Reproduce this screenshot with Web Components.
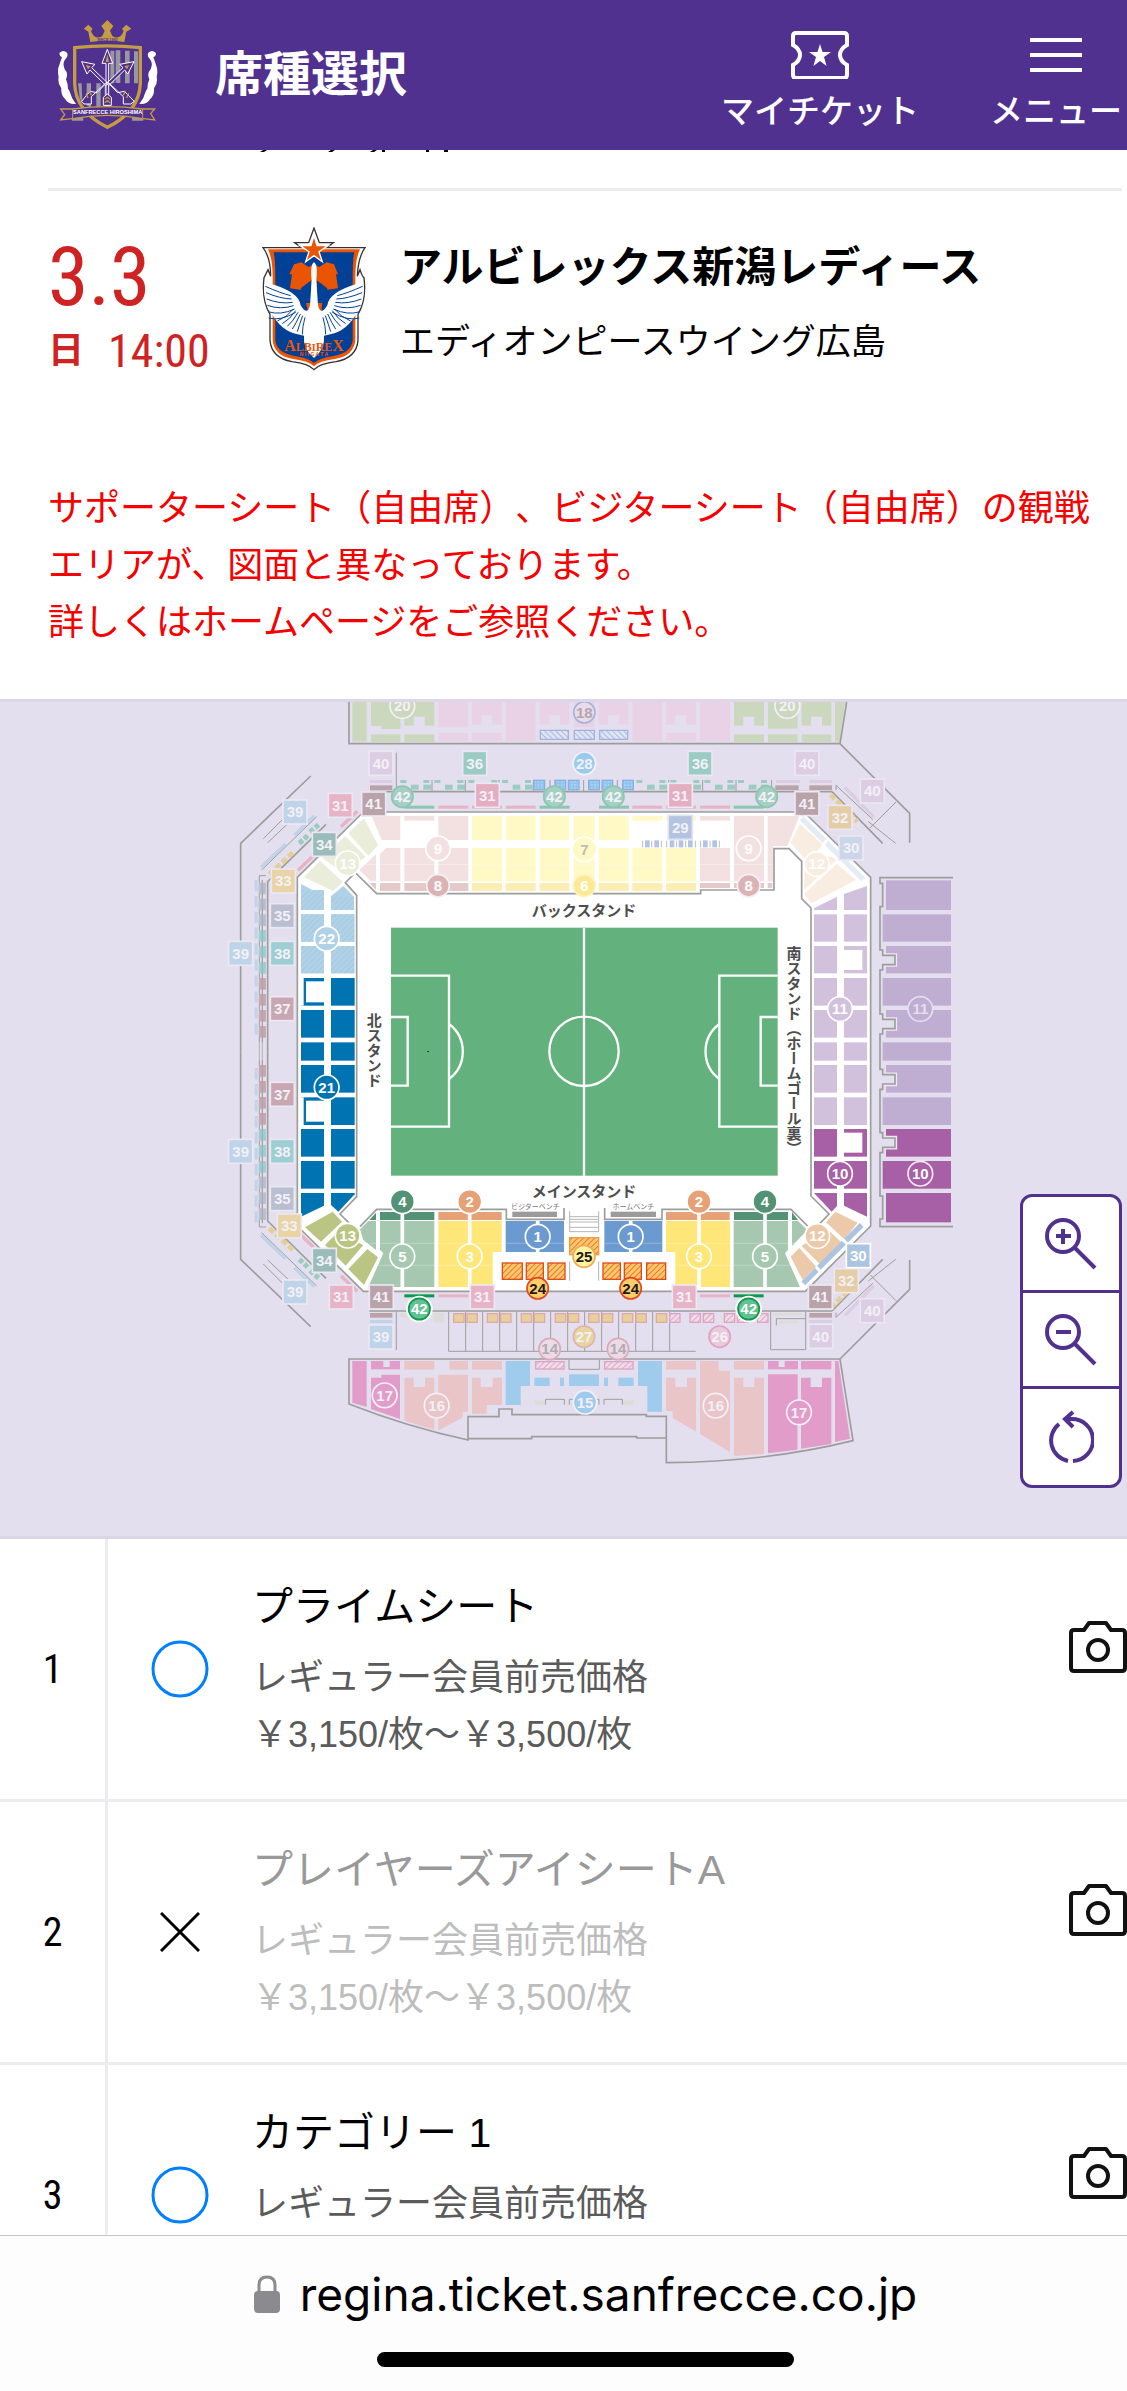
<!DOCTYPE html>
<html lang="ja">
<head>
<meta charset="utf-8">
<meta name="viewport" content="width=device-width, initial-scale=1">
<title>席種選択</title>
<style>
    body {
        --purple: #50318f;
        --line: #ebebf0;
        --red: #cf2323;
        --narrow: "Roboto Condensed", "Liberation Sans Narrow", "Noto Sans CJK JP", sans-serif;
        margin: 0;
        background: white;
        color: black;
        font-family: "Liberation Sans", "Noto Sans CJK JP", sans-serif;
        text-spacing-trim: space-all;
    }
</style>
</head>
<body>

<ticket-page>
    <app-header slot="header">席種選択</app-header>
    <match-info day="3.3" weekday="日" time="14:00">
        <span slot="team">アルビレックス新潟レディース</span>
        <span slot="place">エディオンピースウイング広島</span>
    </match-info>
    <seat-notice>サポーターシート（自由席）、ビジターシート（自由席）の観戦エリアが、図面と異なっております。<br>詳しくはホームページをご参照ください。</seat-notice>
    <seat-map><map-controls></map-controls></seat-map>
    <seat-row number="1" status="open">
        <span slot="name">プライムシート</span>
        <span slot="type">レギュラー会員前売価格</span>
        <span slot="price">￥3,150/枚〜￥3,500/枚</span>
    </seat-row>
    <seat-row number="2" status="closed">
        <span slot="name">プレイヤーズアイシートA</span>
        <span slot="type">レギュラー会員前売価格</span>
        <span slot="price">￥3,150/枚〜￥3,500/枚</span>
    </seat-row>
    <seat-row number="3" status="open">
        <span slot="name">カテゴリー 1</span>
        <span slot="type">レギュラー会員前売価格</span>
    </seat-row>
    <url-bar slot="footer">regina.ticket.sanfrecce.co.jp</url-bar>
</ticket-page>

<script>
// attaches an open shadow root with the given markup
function shadow(el, html) {
    const template = document.createElement('template');
    template.innerHTML = html;
    el.attachShadow({mode: 'open'}).appendChild(template.content.cloneNode(true));
}

class TicketPage extends HTMLElement {
    constructor() {
        super();
        shadow(this, `
            <style>
                :host {
                    display: flex;
                    flex-direction: column;
                    height: 100vh;
                    overflow: hidden;
                }
                main {
                    flex: 1;
                    min-height: 0;
                    overflow: hidden;
                }
            </style>
            <slot name="header"></slot>
            <main><slot></slot></main>
            <slot name="footer"></slot>
        `);
    }
}

class ClubCrest extends HTMLElement {
    constructor() {
        super();
        shadow(this, `
            <style>
                :host { display: block; width: 100px; }
                svg { display: block; width: 100%; }
            </style>
            <svg viewBox="0 0 300 330" role="img" aria-label="SANFRECCE HIROSHIMA">
                <path fill="#c39c43" d="M97 66 91 35 77 26 91 14 104 26 99 33Q110 62 133 48L140 32 130 18 148 0 166 18 156 32 163 48Q186 62 197 33L192 26 205 14 220 26 205 35 199 66Q148 58 97 66Z"/>
                <text x="148" y="62" font-size="11" font-weight="bold" text-anchor="middle" fill="#50318f">SINCE 1992</text>
                <path fill="#50318f" stroke="#c39c43" stroke-width="10" d="M50 83Q148 72 247 83V190Q244 275 148 322 52 275 50 190Z"/>
                <g fill="#99979f">
                    <path d="M157 92h12v98h-12zM173 91h14v98h-14zM201 92h14v98h-14zM228 94h12v96h-12z"/>
                    <path d="M60 190h11l2 60-8-16zM86 190h13v75l-13-10zM115 190h13v72h-13zM140 190h8v66h-8z"/>
                </g>
                <!-- three arrows -->
                <g fill="#50318f" stroke="#fff" stroke-width="3">
                    <path d="M144 258V130h-12L148 88l16 42h-12v128z"/>
                    <path fill="#c39c43" stroke="none" d="M143 126 148 103l5 23z"/>
                    <path d="M143 196 96 150l-9 12-16-37 40 8-10 10 50 48zM153 196 200 150l9 12 19-37-43 8 10 10-50 48z"/>
                    <path fill="#c39c43" stroke="none" d="M83 135l15 4-8 9zM214 135l-15 4 8 9z"/>
                    <path d="M142 190l-42 40 0 22-22 0-7-8 16-20 10-10 20 4 31-32zM154 190l42 40 0 22 22 0 11-8-20-20-10-10-20 4-31-32z"/>
                    <path d="M148 222l-12 10v24h24v-24z"/>
                </g>
                <path fill="none" stroke="#c39c43" stroke-width="4" d="M84 220l6 14m4-22 6 14M212 220l-6 14m-4-22-6 14M140 238l8-6 8 6M140 248l8-6 8 6"/>
                <!-- laurels -->
                <g id="laurel" fill="#fff">
                    <path d="M5 98Q16 88 27 98 32 108 22 118 12 128 20 148 32 160 24 178 30 192 30 206 36 214 42 234L54 252Q30 254 22 238 8 226 10 205-2 190 2 170-3 150 4 135 8 122 12 112 2 108 5 98Z"/>
                </g>
                <use href="#laurel" transform="matrix(-1 0 0 1 298 0)"/>
                <path fill="#99979f" d="M42 290h34v12H42zM222 290h34v12h-34z"/>
                <path fill="#50318f" stroke="#c39c43" stroke-width="4" d="M8 267h36q104-14 210 0h36l-12 14 12 19-40-5q-102-18-200 0l-42 5 12-16z"/>
                <path fill="none" stroke="#c39c43" stroke-width="3" d="M44 267v28M254 267v28"/>
                <text x="149" y="283" font-size="17" font-weight="bold" text-anchor="middle" fill="#fff">SANFRECCE HIROSHIMA</text>
            </svg>
        `);
    }
}

class AppHeader extends HTMLElement {
    constructor() {
        super();
        shadow(this, `
            <style>
                :host {
                    display: flex;
                    align-items: center;
                    height: 150px;
                    padding: 0 5px 0 58px;
                    box-sizing: border-box;
                    background: var(--purple);
                    color: white;
                }
                h1 {
                    margin: 0 0 0 57px;
                    flex: 1;
                    font-size: 48px;
                    line-height: 72px;
                    font-weight: 700;
                    white-space: nowrap;
                }
                nav {
                    display: flex;
                    gap: 71px;
                    padding-top: 14px;
                }
                a, button {
                    display: flex;
                    flex-direction: column;
                    align-items: center;
                    gap: 6px;
                    padding: 0;
                    border: 0;
                    background: none;
                    color: inherit;
                    font: 500 33px/48px "Noto Sans CJK JP", sans-serif;
                    text-decoration: none;
                    white-space: nowrap;
                }
                nav svg { height: 48px; }
            </style>
            <club-crest></club-crest>
            <h1><slot></slot></h1>
            <nav>
                <a href="#tickets">
                    <svg viewBox="0 0 58 48" width="58" fill="none" stroke="#fff" stroke-width="4">
                        <path d="M5 2H53Q56 2 56 5V14Q49 18 49 24T56 34V44Q56 47 53 47H5Q2 47 2 44V34Q9 30 9 24T2 14V5Q2 2 5 2Z"/>
                        <path fill="#fff" stroke="none" d="M29 13l2.500 8H40l-7 5 2.600 9L29 30l-6.600 5L25 26l-7-5h8.500z"/>
                    </svg>
                    <span>マイチケット</span>
                </a>
                <button type="button">
                    <svg viewBox="0 0 52 48" width="52" stroke="#fff" stroke-width="4">
                        <path d="M0 9H52M0 24H52M0 39H52"/>
                    </svg>
                    <span>メニュー</span>
                </button>
            </nav>
        `);
    }
}

class AlbirexBadge extends HTMLElement {
    constructor() {
        super();
        // feather lines of one wing, the other one is mirrored
        let feathers = '';
        for (let i = 0; i < 6; i++) {
            feathers += `<path d="M${10 + i * 2} ${178 + i * 19}Q55 ${198 + i * 17} ${86 + i * 3} ${206 + i * 10}"/>`;
        }
        for (let i = 0; i < 6; i++) {
            feathers += `<path d="M${46 + i * 15} ${282 + i * 8}Q${76 + i * 9} ${270 + i * 6} ${94 + i * 7} ${246 + i * 5}"/>`;
        }
        shadow(this, `
            <style>
                :host { display: block; width: 104px; }
                svg { display: block; width: 100%; }
            </style>
            <svg viewBox="0 0 312 432" role="img" aria-label="ALBIREX NIIGATA">
                <path fill="#fff" stroke="#3a3030" stroke-width="4" d="M3 62H118L98 47H140L156 3 172 47H214L194 62H309Q288 92 286 148L294 128Q300 148 306 152 314 220 288 262V340Q284 392 222 404 172 410 156 428 140 410 90 404 28 392 24 340V262Q-2 220 6 152L18 128 26 148Q26 92 3 62Z"/>
                <path fill="#ea5504" d="M18 67H294Q280 95 280 150V340Q275 388 218 396 172 402 156 418 140 402 94 396 37 388 32 340V150Q32 95 18 67Z"/>
                <path fill="#004097" d="M35 76H277Q272 95 272 150V340Q268 378 214 387 172 393 156 408 140 393 98 387 44 378 40 340V150Q40 95 35 76Z"/>
                <path fill="#ea5504" stroke="#fff" stroke-width="4" d="M156 26 165 56H198L171 74 181 104 156 86 131 104 141 74 114 56H147Z"/>
                <path fill="#ea5504" d="M82 142 96 112 118 106 140 120 156 112 172 120 194 106 216 112 228 142 222 142 228 184 184 190 178 255H138L124 190 84 184 90 142Z"/>
                <path fill="#004097" d="M116 184 148 160V228H132ZM196 184 164 160V228H180Z"/>
                <path fill="#fff" d="M156 106Q168 112 163 160L168 235Q176 268 196 235 200 195 286 170L294 145Q304 160 306 190 302 240 284 258 255 312 205 322L186 326Q190 365 156 393 122 365 126 326L107 322Q57 312 28 258 10 240 6 190 8 160 18 145L26 170Q112 195 116 235 136 268 144 235L149 160Q144 112 156 106Z"/>
                <g id="feathers" fill="none" stroke="#004097" stroke-width="3">${feathers}</g>
                <use href="#feathers" transform="matrix(-1 0 0 1 312 0)"/>
                <g fill="#ea5504" text-anchor="middle" font-family="Liberation Serif" font-weight="bold">
                    <text x="156" y="371" font-size="48">A<tspan font-size="36">LB</tspan><tspan font-size="30">I</tspan><tspan font-size="36">RE</tspan>X</text>
                    <text x="156" y="387" font-size="15" font-family="Liberation Sans">N I I G A T A</text>
                </g>
            </svg>
        `);
    }
}

class MatchInfo extends HTMLElement {
    constructor() {
        super();
        shadow(this, `
            <style>
                :host {
                    display: block;
                    padding: 0 5px 0 48px;
                }
                .previous {
                    display: block;
                    height: 38px;
                }
                .match {
                    display: grid;
                    grid-template-columns: 214px 104px 1fr;
                    border-top: 3px solid var(--line);
                    padding-top: 36px;
                }
                .date {
                    color: var(--red);
                    font-family: var(--narrow);
                }
                .day {
                    font-size: 82px;
                    line-height: 100px;
                }
                .time {
                    display: flex;
                    align-items: center;
                    gap: 24px;
                    font-size: 46px;
                    line-height: 48px;
                }
                b {
                    font-size: 36px;
                    font-weight: 700;
                }
                .text { padding-left: 34px; }
                h2 {
                    margin: 11px 0 18px;
                    font-size: 42px;
                    line-height: 60px;
                    font-weight: 700;
                }
                p {
                    margin: 0;
                    font-size: 35px;
                    line-height: 52px;
                }
            </style>
            <svg class="previous" viewBox="0 0 400 38" width="400">
                <path d="M215 0h4l-3 2h-4zM283 0h4l-3 2h-4zM325 0h4l-3 2h-4zM334 0h3v2h-3zM378 0h3v2h-3zM396 0h4v2h-4z"/>
            </svg>
            <div class="match">
                <div class="date">
                    <div class="day"></div>
                    <div class="time"><b></b><span></span></div>
                </div>
                <albirex-badge></albirex-badge>
                <div class="text">
                    <h2><slot name="team"></slot></h2>
                    <p><slot name="place"></slot></p>
                </div>
            </div>
        `);
    }

    connectedCallback() {
        this.shadowRoot.querySelector('.day').textContent = this.getAttribute('day');
        this.shadowRoot.querySelector('.time b').textContent = this.getAttribute('weekday');
        this.shadowRoot.querySelector('.time span').textContent = this.getAttribute('time');
    }
}

class SeatNotice extends HTMLElement {
    constructor() {
        super();
        shadow(this, `
            <style>
                :host {
                    display: block;
                    padding: 105px 34px 48px 48px;
                    color: #f60000;
                    font-size: 36px;
                    line-height: 57px;
                }
            </style>
            <slot></slot>
        `);
    }
}

// ---- seat map drawing, three units to a pixel ----

const BG = '#e4dfee';
const WALL = '#9d9d9d';
const GREEN = '#cbd8be';
const PINK = '#e9d2e6';
const ROSE = '#f3e1e1';
const YELLOW = '#fff9c5';
const SKY = '#9fcbed';
const MAGENTA = '#e19cca';
const SALMON = '#e9c5c8';

const rects = (fill, list) => list.map(([x, y, w, h]) => `<rect x="${x}" y="${y}" width="${w}" height="${h}" fill="${fill}"/>`).join('');
const polys = (fill, list) => list.map(p => `<polygon points="${p}" fill="${fill}"/>`).join('');
const line = (stroke, width, d, extra = '') => `<path d="${d}" fill="none" stroke="${stroke}" stroke-width="${width}" ${extra}/>`;
const columns = (xs, y, w, h) => xs.map(x => [x, y, w, h]);

const square = (n, x, y, fill, edge = '#ebe7f3', ink = '#f3f0f7') => `
    <rect x="${x - 36}" y="${y - 36}" width="72" height="72" fill="${fill}" stroke="${edge}" stroke-width="5"/>
    <text x="${x}" y="${y + 16}" fill="${ink}">${n}</text>`;

const round = (n, x, y, fill, edge = '#fff', ink = '#fff', r = 37) => `
    <circle cx="${x}" cy="${y}" r="${r}" fill="${fill}" stroke="${edge}" stroke-width="5"/>
    <text x="${x}" y="${y + 16}" fill="${ink}">${n}</text>`;

function upperBack() {
    const teal = [541, 643, 745, 846, 1249, 1351, 1453, 1554];
    return rects(GREEN, [[397, 36, 43, 119], [453, 36, 88, 72], [484, 100, 57, 17], [553, 36, 90, 71], [453, 133, 88, 23], [553, 133, 90, 23],
            [1542, 36, 90, 71], [1542, 133, 90, 23], [1644, 36, 89, 80], [1644, 133, 89, 23], [1745, 36, 89, 71], [1745, 133, 89, 23]])
        + polys(GREEN, ['1845,36 1875,36 1859,155 1845,155'])
        + rects(PINK, [[655, 36, 89, 76], [655, 129, 89, 25], [756, 36, 90, 68], [756, 129, 90, 25], [857, 36, 90, 118], [959, 36, 89, 68],
            [1062, 36, 62, 76], [1136, 36, 90, 68], [1237, 36, 90, 118], [1338, 36, 90, 68], [1338, 129, 90, 25], [1440, 36, 90, 118]])
        + rects(BG, [[581, 80, 33, 28], [784, 76, 33, 28], [987, 76, 33, 28], [1165, 76, 33, 28], [1366, 76, 33, 28], [1570, 80, 33, 28], [1773, 80, 33, 28]])
        + `<g fill="url(#hatchBlue)" stroke="#a0b3dc" stroke-width="4"><path d="M961 121h84v27h-84zM1063 121h60v27h-60zM1139 121h84v27h-84z"/></g>`
        + line(WALL, 5, 'M387 36V161H1860L1880 36')
        + line(WALL, 5, 'M450 305H1836')
        + line(WALL, 3, 'M529 188V305M636 270V305M736 270V305M837 270V305M940 270V305M990 270V305M1091 270V305M1192 270V305M1346 270V305M1448 270V305M1548 270V305M1655 270V305')
        + rects('#9accbf', teal.flatMap(x => [[x, 270, 18, 9], [x + 69, 270, 18, 9], [x + 32, 284, 23, 15], [x + 69, 284, 23, 15]]))
        + `<g fill="url(#dots)" stroke="#86b0e2" stroke-width="4">${[942, 1005, 1045, 1106, 1146, 1208].map(x => `<rect x="${x}" y="271" width="32" height="28"/>`).join('')}</g>`
        + rects('#ddcde3', [[450, 270, 67, 9], [1668, 270, 72, 9], [1768, 270, 68, 9]])
        + rects('#b9a3a9', [[450, 286, 67, 14], [1666, 286, 70, 14], [1768, 286, 68, 14]])
        + rects('#8cc5b0', columns([553, 959, 1137, 1541], 347, 90, 9))
        + rects('#e7b3c5', columns([655, 756, 857, 1237, 1338, 1440], 347, 90, 9));
}

function backStand() {
    return polys(ROSE, ['455,378 541,378 541,450 485,450', '480,492 498,474 541,474 541,574 480,574', '418,540 468,492 468,574 452,574', '1643,378 1738,378 1702,468 1643,468'])
        + rects(ROSE, [[553, 378, 90, 14], [655, 378, 90, 72], [553, 474, 90, 100], [655, 474, 90, 100], [1440, 378, 90, 14], [1440, 474, 90, 100],
            [1542, 378, 90, 72], [1542, 450, 90, 124], [1643, 468, 16, 106]])
        + rects('#e5c8c8', [[480, 579, 61, 24], [553, 579, 90, 24], [655, 579, 90, 24], [1440, 579, 90, 15], [1542, 579, 90, 15], [1643, 579, 14, 15]])
        + polys('#e5c8c8', ['448,579 468,579 468,600'])
        + [[378, 72, YELLOW], [474, 100, YELLOW], [579, 24, '#fceeb2']].map(([y, h, fill]) =>
            rects(fill, [[756, y, 90, h], [857, y, 90, h], [959, y, 89, h], [1061, y, 63, h], [1136, y, 90, h]])).join('')
        + rects(YELLOW, [...columns([1237, 1338], 378, 90, 14), ...columns([1237, 1338], 474, 90, 100)])
        + rects('#fceeb2', columns([1237, 1338], 579, 90, 24))
        + line('#fff', 2, 'M418 523H1658', 'opacity="0.5"')
        + rects('#b3c4e0', columns([1275, 1303, 1349, 1376, 1404, 1449, 1477], 451, 14, 21))
        + line(WALL, 2, 'M1268 452V472M1295 452V472M1324 452V472M1340 452V472M1370 452V472M1397 452V472M1426 452V472M1442 452V472M1470 452V472M1498 452V472');
}

function corners() {
    return polys('#e9edd9', ['385,430 432,385 474,465 445,497', '308,503 375,438 437,500 372,552', '252,562 300,512 368,575 340,603'])
        + polys('#f9ede2', ['1712,458 1740,402 1810,464 1758,510', '1754,528 1780,500 1835,500 1848,510 1752,605', '1752,610 1848,520 1908,570 1774,640'])
        + line('#e4edf6', 16, 'M1745 385 1930 568')
        + line('#fff', 9, 'M1800 480 1822 448M1750 608 1862 505')
        + polys('#bac583', ['255,1612 338,1565 366,1595 303,1655', '315,1665 352,1628 430,1665 377,1727', '385,1737 442,1677 474,1702 432,1785'])
        + polys('#ebc9a9', ['1846,1565 1913,1598 1873,1648 1818,1597', '1820,1615 1865,1658 1802,1725 1745,1668', '1712,1700 1738,1674 1788,1730 1748,1770'])
        + line('#abc4e1', 16, 'M1925 1605 1750 1780')
        + line('#fff', 9, 'M1868 1648 1888 1668M1788 1730 1802 1746');
}

function sideStands() {
    const rows = [[673, 82], [768, 82], [864, 83], [960, 83], [1057, 55], [1125, 83], [1222, 83], [1317, 83], [1413, 83]];
    const west = rows.map(([y, h], i) => rects(i < 2 ? '#b0d2e7' : '#0073b2', [[243, y, 69, h], [333, y, 71, h]])).join('');
    const east = rows.map(([y, h], i) => rects(i < 7 ? '#d2c1dc' : '#a75fa5', [[1782, y, 69, h], [1872, y, 69, h]])).join('');
    const far = [[571, 89], ...rows, [1509, 88]].map(([y, h], i) => {
        const left = i % 2 ? 1988 : 1998;
        return rects(i < 8 ? '#c0add2' : '#a75fa5', [[left, y, 2193 - left, h]]);
    }).join('');
    const tab = c => `V${c - 30}h8v16h37v28h-37v16h-8`;
    return west
        + polys('#b0d2e7', ['243,582 312,618 312,660 243,660', '333,618 370,588 402,620 402,660 333,660'])
        + polys('#0073b2', ['243,1509 312,1509 312,1547 243,1580', '333,1509 404,1509 404,1513 355,1565 333,1545'])
        + rects('#fff', [[243, 864, 8, 83], [243, 1222, 8, 83], [258, 874, 56, 63], [258, 1232, 56, 63]])
        + `<path fill="url(#hatchWest)" d="M243 600h69v60h-69zM333 620h69v40h-69zM243 673h69v82h-69zM333 673h69v82h-69zM243 768h69v82h-69zM333 768h69v82h-69z"/>`
        + east
        + polys('#d2c1dc', ['1782,655 1851,620 1851,660 1782,660', '1872,612 1941,588 1941,660 1872,660'])
        + polys('#a75fa5', ['1782,1509 1851,1509 1851,1548 1835,1565', '1872,1509 1941,1509 1941,1580 1872,1547'])
        + rects('#fff', [[1872, 780, 55, 60], [1872, 1328, 55, 60]])
        + far
        + line('#ede8f3', 13, `M1984 796h41v28h-41M1984 988h41v28h-41M1984 1154h41v28h-41M1984 1344h41v28h-41`)
        + rects(BG, [[1984, 796, 39, 28], [1984, 988, 39, 28], [1984, 1154, 39, 28], [1984, 1344, 39, 28]])
        + line(WALL, 5, `M2199 563H1980v17h8v70h-8${tab(810)}${tab(1002)}${tab(1168)}${tab(1358)}V1518h8v69h-8v23H2199`);
}

function mainStand() {
    return rects('#539274', [[480, 1566, 163, 24], [1542, 1566, 162, 24]])
        + polys('#539274', ['448,1590 468,1568 468,1590', '1716,1566 1720,1572 1734,1590 1716,1590'])
        + rects('#e6a276', [[655, 1566, 190, 24], [1338, 1566, 191, 24]])
        + polys('#a6c8b1', ['420,1618 445,1593 468,1593 468,1680 430,1650', '480,1593 643,1593 643,1791 445,1791 490,1690 480,1680',
            '1541,1593 1704,1593 1704,1680 1695,1690 1740,1791 1541,1791', '1716,1593 1734,1593 1762,1620 1716,1668'])
        + polys('#fee678', ['655,1593 845,1593 845,1686 818,1686 818,1791 655,1791', '1338,1593 1530,1593 1530,1791 1366,1791 1366,1686 1338,1686'])
        + rects('#6b9ad1', [[857, 1593, 175, 93], [1153, 1593, 174, 93]])
        + line('#fff', 2, 'M450 1660H1032M450 1726H818M1153 1660H1740M1366 1726H1740', 'opacity="0.4"')
        + line('#fff', 11, 'M547 1566V1791M749 1566V1791M1437 1566V1791M1635 1566V1791M953 1593V1686M1232 1593V1686')
        + `<g fill="url(#hatchOrange)" stroke="#e04a1c" stroke-width="4">${[[847, 60], [919, 51], [984, 51], [1149, 52], [1213, 51], [1280, 57]].map(([x, w]) => `<rect x="${x}" y="1719" width="${w}" height="49"/>`).join('')}</g>`
        + line('#b5b5b5', 3, 'M1049 1564V1625H1136V1564M1049 1580H1136M1049 1588H1136M1049 1596H1136M1049 1612H1136M1049 1714V1772M1136 1714V1772')
        + `<rect x="1049" y="1643" width="87" height="51" fill="url(#hatchOrange)" stroke="#ee9a48" stroke-width="4"/>`
        + rects('#9b9b9b', [[877, 1565, 134, 16], [1172, 1565, 136, 16]]);
}

function lowerMain() {
    const yellow = [701, 741, 802, 842, 904, 943, 1006, 1045, 1106, 1147, 1207, 1248, 1309];
    const pink = [1349, 1410, 1450, 1513, 1552, 1613];
    let posts = '';
    for (let x = 686; x < 1360; x += 51) posts += `M${x} 1866V1984`;
    return rects('#0b9a4a', columns([553, 1541], 1813, 90, 9))
        + rects('#e7b3c5', columns([655, 1440], 1813, 90, 9))
        + line(WALL, 3, `${posts}M686 1984H1427M529 1866V1980`)
        + line(WALL, 3, 'M1652 1866V1979H1757V1866M1669 1906V1886H1757')
        + rects('#dcdcd8', [[538, 1869, 30, 14], [640, 1869, 32, 28], [1660, 1869, 86, 8], [1677, 1892, 58, 8], [945, 2131, 32, 13], [1207, 2131, 34, 13]])
        + line(WALL, 5, 'M448 1863H1836')
        + `<g fill="#e6d09c" stroke="#e3a9a9" stroke-width="4">${yellow.map(x => `<rect x="${x}" y="1871" width="31" height="26"/>`).join('')}</g>`
        + `<g fill="url(#hatchPink)" stroke="#e0a3c4" stroke-width="4">${pink.map(x => `<rect x="${x}" y="1871" width="31" height="26"/>`).join('')}
            <rect x="947" y="2015" width="85" height="22"/><rect x="1154" y="2015" width="85" height="22"/></g>`
        + rects('#b9a3a9', [[450, 1869, 67, 14], [1768, 1869, 68, 14]])
        + rects('#bfd4e8', [[450, 1890, 67, 9]])
        + rects('#ddcde3', [[1768, 1890, 68, 9]])
        + polys(MAGENTA, ['397,2013 440,2013 440,2151 397,2138', '453,2063 484,2063 484,2054 540,2054 540,2187 453,2157',
            '1644,2053 1733,2053 1733,2279 1644,2290', '1743,2063 1772,2063 1772,2091 1806,2091 1806,2063 1834,2063 1834,2262 1743,2276', '1845,2013 1855,2013 1890,2246 1845,2256'])
        + rects(MAGENTA, [[453, 2013, 87, 25], [1644, 2013, 90, 25], [1743, 2013, 91, 25]])
        + rects(BG, [[490, 2013, 19, 18], [1676, 2013, 18, 18]])
        + rects(SALMON, [[553, 2013, 90, 26], [688, 2013, 56, 26], [756, 2013, 90, 26], [1338, 2013, 90, 26], [1542, 2013, 90, 26]])
        + polys(SALMON, ['553,2063 581,2063 581,2091 615,2091 615,2063 643,2063 643,2219 553,2192', '655,2054 744,2054 744,2165 728,2165 728,2182 655,2222',
            '756,2063 782,2063 782,2091 818,2091 818,2063 846,2063 846,2145 800,2145 800,2171 756,2171',
            '1440,2013 1496,2013 1496,2042 1530,2042 1530,2286 1440,2232', '1338,2063 1366,2063 1366,2091 1401,2091 1401,2063 1428,2063 1428,2225 1358,2184 1358,2163 1338,2163',
            '1542,2063 1570,2063 1570,2091 1603,2091 1603,2063 1632,2063 1632,2292 1545,2298 1542,2294'])
        + polys(SKY, ['857,2013 930,2013 930,2088 902,2088 902,2145 857,2145', '1254,2013 1326,2013 1326,2165 1282,2165 1282,2088 1254,2088'])
        + rects(SKY, [[943, 2063, 46, 25], [1020, 2063, 12, 25], [1047, 2053, 90, 35], [1152, 2063, 12, 25], [1195, 2063, 46, 25]])
        + line(BG, 8, 'M650 2180V2222M1737 2190V2280')
        + line(WALL, 3, 'M1047 2010V2038H1138V2010M977 2144V2128H1033V2144M1048 2144V2128H1137V2144M1152 2144V2128H1207V2144')
        + line(WALL, 5, 'M387 2007H1860L1899 2252Q1640 2316 1339 2318V2179H1279V2174H876V2157H837V2180H744V2250Q560 2210 387 2142ZM744 2246H935V2240H1250V2244H1339');
}

function concourse() {
    // north half, mirrored for the south
    const half = line(WALL, 5, 'M272 258 62 460V1084M318 403 143 575V1084M1860 161 2069 370V458M1836 305 1988 460')
        + line(WALL, 3, 'M290 380 125 540M188 388 130 446M215 390 143 458M118 1057V557H138M127 1057V570M1848 300V286L1958 388M1945 395 2027 460M2028 336 1950 414')
        + line('#bfd4e8', 10, 'M123 532 197 462M223 435 283 378')
        + line('#9accbf', 15, 'M238 460 264 436M270 426 296 404', 'stroke-dasharray="14 6"')
        + line('#e5cf98', 15, 'M148 553 222 485M1832 314 1912 395', 'stroke-dasharray="18 8"')
        + line('#e7b3c5', 10, 'M234 541 280 497M363 410 412 364')
        + line('#ddcde3', 10, 'M1875 292 1962 382');
    const blocks = [578, 626, 673, 720, 768, 816, 864, 912, 960, 1008];
    const fills = ['#b9bfd0', '#b9bfd0', '#b9bfd0', '#9dced3', '#9dced3', '#9dced3', '#c8a7b3', '#c8a7b3', '#c8a7b3', '#c8a7b3'];
    return half + `<g transform="matrix(1 0 0 -1 0 2168)">${half}</g>`
        + blocks.map((y, i) => rects(fills[i], [[117, y, 21, 35], [117, 2133 - y, 21, 35]])
            + rects('#bfd4e8', [[104, y - 8, 9, 34], [104, 2142 - y, 9, 34]])).join('')
        + line(WALL, 2, 'M127 570V1600M118 1057V1112');
}

function pitch() {
    return rects('#63b27d', [[513, 713, 1160, 744]])
        + line('#fff', 7, 'M1092 713V1457M513 857H687V1310H513M513 981H563V1187H513M687 1002A103 103 0 0 1 687 1167M1673 857H1498V1310H1673M1673 981H1622V1187H1673M1498 1002A103 103 0 0 0 1498 1167')
        + `<circle cx="1092" cy="1084" r="104" fill="none" stroke="#fff" stroke-width="7"/><rect x="622" y="1083" width="5" height="3" fill="#222"/>`;
}

function labels() {
    const pale = '#f3f0f7';
    const squares = [
        [40, 483, 220, '#ddcde3'], [36, 764, 220, '#9accc5'], [39, 225, 366, '#bfd4e8'], [31, 361, 346, '#e7b3c5'], [41, 461, 342, '#b9a3a9'],
        [31, 802, 316, '#e5adc0'], [31, 1381, 316, '#e5adc0'], [34, 313, 463, '#9abdbb'], [33, 190, 573, '#e8d4a5'], [35, 187, 677, '#b9bfd0'],
        [38, 187, 790, '#9dced3'], [39, 62, 790, '#bfd4e8'], [36, 1440, 220, '#9accc5'], [40, 1761, 220, '#ddcde3'], [40, 1957, 303, '#ddcde3'],
        [41, 1761, 341, '#b9a3a9'], [32, 1860, 382, '#e5cda5'], [30, 1893, 474, '#ccd6e9'], [37, 187, 956, '#c8a7b3'], [37, 187, 1213, '#c8a7b3'],
        [39, 62, 1384, '#bfd4e8'], [38, 187, 1384, '#9dced3'], [35, 187, 1526, '#b9bfd0'], [33, 208, 1608, '#e8d4a5'], [34, 313, 1711, '#9abdbb'],
        [39, 225, 1806, '#bfd4e8'], [31, 364, 1821, '#e7b3c5'], [41, 484, 1821, '#b9a3a9'], [31, 787, 1821, '#e7b3c5'], [39, 483, 1941, '#bfd4e8'],
        [31, 1393, 1821, '#e7b3c5'], [41, 1801, 1821, '#b9a3a9'], [32, 1879, 1772, '#e5cda5'], [40, 1957, 1862, '#ddcde3'], [40, 1802, 1939, '#ddcde3'],
        [29, 1381, 412, '#b3c4e0', '#dfe6f1'], [30, 1915, 1697, '#abc4e1', '#fff', '#fff']
    ];
    const circles = [
        [20, 547, 48, GREEN, pale, pale], [20, 1702, 48, GREEN, pale, pale], [18, 1093, 67, '#e9dbe8', '#a9b3da', '#b3a5b3', 32],
        [28, 1093, 220, '#9acbee', pale, pale, 34],
        ...[547, 1003, 1180, 1640].map(x => [42, x, 320, '#a3d0c3', '#8cc5b0', pale, 32]),
        [9, 654, 475, ROSE], [9, 1586, 475, ROSE], [8, 654, 587, '#dcb3b5', pale, '#fff', 34], [8, 1586, 587, '#dcb3b5', pale, '#fff', 34],
        [7, 1093, 478, YELLOW, '#fff', '#bdbdbd'], [6, 1093, 587, '#fbe994', '#fdf3c4', '#fff', 33], [12, 1790, 522, '#f9ede2'], [13, 383, 520, '#e9edd9'],
        [22, 320, 746, '#b0d2e7'], [21, 320, 1192, '#0073b2'], [13, 383, 1637, '#bac583'],
        [4, 547, 1535, '#539274', '#fff', '#fff', 36], [4, 1635, 1535, '#539274', '#fff', '#fff', 36],
        [2, 749, 1535, '#e6a276', '#fff', '#fff', 36], [2, 1437, 1535, '#e6a276', '#fff', '#fff', 36],
        [1, 953, 1640, '#6b9ad1'], [1, 1232, 1640, '#6b9ad1'], [5, 547, 1699, '#a6c8b1'], [5, 1635, 1699, '#a6c8b1'],
        [3, 749, 1699, '#fee678'], [3, 1437, 1699, '#fee678'],
        [24, 953, 1795, '#ffcd6c', '#e04a1c', '#1a1a1a', 32], [24, 1232, 1795, '#ffcd6c', '#e04a1c', '#1a1a1a', 32], [25, 1092, 1699, '#fff3a0', '#f2a856', '#1a1a1a', 33],
        [12, 1792, 1638, '#ebc9a9'], [14, 989, 1977, '#e9dce6', '#dca9b8', '#b3a9b3', 32], [14, 1194, 1977, '#e9dce6', '#dca9b8', '#b3a9b3', 32],
        [27, 1092, 1940, '#e6d59f', '#e0b3ae', pale, 32], [26, 1499, 1940, '#e9cadb', '#e2a1c4', pale, 32], [15, 1095, 2137, SKY, pale, pale, 35],
        [17, 494, 2116, MAGENTA, pale, pale], [17, 1737, 2167, MAGENTA, pale, pale], [16, 650, 2147, SALMON, pale, pale], [16, 1487, 2147, SALMON, pale, pale],
        [11, 1860, 957, '#d2c1dc'], [11, 2101, 957, '#c0add2', '#e4dfee', '#e4dfee'], [10, 1860, 1451, '#a75fa5'], [10, 2101, 1451, '#a75fa5', '#f3e8f3']
    ];
    return `<g font-size="45" font-weight="bold" text-anchor="middle">
            ${squares.map(s => square(...s)).join('')}
            ${circles.map(c => round(...c)).join('')}
            <g fill="#fff"><circle cx="598" cy="1857" r="40"/><circle cx="1586" cy="1857" r="40"/></g>
            ${round(42, 598, 1857, '#63c194', '#0b9a4a', '#fff', 32)}${round(42, 1586, 1857, '#63c194', '#0b9a4a', '#fff', 32)}
        </g>
        <g font-family="Noto Sans CJK JP" font-size="45" font-weight="bold" fill="#4d4d4d">
            <text x="1092" y="679" text-anchor="middle">バックスタンド</text>
            <text x="1092" y="1521" text-anchor="middle">メインスタンド</text>
            <text x="463" y="968" writing-mode="vertical-rl">北スタンド</text>
            <text x="1722" y="766" writing-mode="vertical-rl">南スタンド（ホームゴール裏）</text>
        </g>
        <g font-family="Noto Sans CJK JP" font-size="21" fill="#777" text-anchor="middle">
            <text x="946" y="1557">ビジターベンチ</text>
            <text x="1240" y="1557">ホームベンチ</text>
        </g>`;
}

class SeatMap extends HTMLElement {
    constructor() {
        super();
        const hatch = (id, back, ink, dir) => `
            <pattern id="${id}" width="12" height="12" patternUnits="userSpaceOnUse" patternTransform="rotate(${dir})">
                <rect width="12" height="12" fill="${back}"/><rect width="3" height="12" fill="${ink}"/>
            </pattern>`;
        shadow(this, `
            <style>
                :host {
                    display: block;
                    position: relative;
                    border-top: 3px solid #ddd5e8;
                    border-bottom: 3px solid #ddd5e8;
                    background: ${BG};
                }
                svg { display: block; width: 100%; }
                slot {
                    display: block;
                    position: absolute;
                    right: 5px;
                    bottom: 48px;
                }
            </style>
            <svg viewBox="-660 36 3381 2502" role="img" aria-label="座席図">
                <defs>
                    ${hatch('hatchBlue', '#dfe3f3', '#a9bbe0', -45)}
                    ${hatch('hatchWest', '#b0d2e7', '#a3c9e1', 45)}
                    ${hatch('hatchOrange', '#ffc96b', '#e8772e', 45)}
                    ${hatch('hatchPink', '#eddde8', '#e0a9c6', 45)}
                    <pattern id="dots" width="10" height="10" patternUnits="userSpaceOnUse">
                        <rect width="10" height="10" fill="#8fc4ee"/><circle cx="5" cy="5" r="2" fill="#d5e6f6"/>
                    </pattern>
                </defs>
                ${concourse()}
                <path d="M430 366H1752L1952 562V1608L1756 1804H430L232 1608V562Z" fill="#fff" stroke="${WALL}" stroke-width="5"/>
                ${upperBack()}
                ${backStand()}
                ${sideStands()}
                ${mainStand()}
                ${corners()}
                ${line(WALL, 5, 'M1032 1554V1588H859V1558H470L420 1610M386 1598 360 1572 410 1520V616L376 578 406 548 470 611H1442V600H1662V476H1707L1745 514V626L1773 654V1518L1827 1572 1800 1600M1763 1608 1713 1558H1326V1588H1154V1554')}
                ${lowerMain()}
                ${pitch()}
                ${labels()}
            </svg>
            <slot></slot>
        `);
    }
}

class MapControls extends HTMLElement {
    constructor() {
        super();
        shadow(this, `
            <style>
                :host {
                    display: flex;
                    flex-direction: column;
                    width: 96px;
                    border: 3px solid var(--purple);
                    border-radius: 12px;
                    background: white;
                    overflow: hidden;
                }
                button {
                    display: grid;
                    place-items: center;
                    height: 96px;
                    padding: 0;
                    border: 0;
                    background: none;
                }
                button:not(:last-child) { border-bottom: 3px solid var(--purple); }
                svg { display: block; }
            </style>
            <button type="button" aria-label="拡大">
                <svg width="52" height="52" fill="none" stroke="#50318f" stroke-width="4">
                    <circle cx="18" cy="18" r="16"/><path d="M30 30 50 50M11 18H26M18 11V26"/>
                </svg>
            </button>
            <button type="button" aria-label="縮小">
                <svg width="52" height="52" fill="none" stroke="#50318f" stroke-width="4">
                    <circle cx="18" cy="18" r="16"/><path d="M30 30 50 50M11 18H26"/>
                </svg>
            </button>
            <button type="button" aria-label="リセット">
                <svg width="46" height="54" fill="none" stroke="#50318f" stroke-width="4">
                    <path d="M25 51A21 21 0 0 0 23 9H17M11 14A21 21 0 0 0 20 51M25 2 17 9 25 17"/>
                </svg>
            </button>
        `);
    }
}

class SeatRow extends HTMLElement {
    constructor() {
        super();
        shadow(this, `
            <style>
                :host {
                    display: grid;
                    grid-template-columns: 108px 144px 1fr auto;
                    height: 260px;
                    border-bottom: 3px solid var(--line);
                }
                .number, .status {
                    display: grid;
                    place-items: center;
                }
                .number {
                    border-right: 3px solid var(--line);
                    font-family: var(--narrow);
                    font-size: 40px;
                }
                .text {
                    padding-top: 38px;
                    color: #5b5b5b;
                    font-size: 36px;
                    line-height: 57px;
                }
                h3 {
                    margin: 0 0 12px;
                    color: black;
                    font-size: 41px;
                    line-height: 60px;
                    font-weight: 400;
                }
                p { margin: 0; }
                :host([status="closed"]) .text { color: #bdbdbd; }
                :host([status="closed"]) h3 { color: #999; }
                button {
                    align-self: start;
                    margin-top: 81px;
                    padding: 0;
                    border: 0;
                    background: none;
                }
                svg { display: block; }
            </style>
            <div class="number"></div>
            <div class="status"></div>
            <div class="text">
                <h3><slot name="name"></slot></h3>
                <p><slot name="type"></slot></p>
                <p><slot name="price"></slot></p>
            </div>
            <button type="button" aria-label="座席からの眺め">
                <svg width="58" height="54" viewBox="0 0 58 54" fill="none" stroke="#111" stroke-width="4" stroke-linejoin="round">
                    <path d="M5 10H15L20 3H37L42 10H53Q56 10 56 13V48Q56 51 53 51H5Q2 51 2 48V13Q2 10 5 10Z"/>
                    <circle cx="29" cy="30" r="10"/>
                </svg>
            </button>
        `);
    }

    connectedCallback() {
        const open = this.getAttribute('status') === 'open';
        this.shadowRoot.querySelector('.number').textContent = this.getAttribute('number');
        this.shadowRoot.querySelector('.status').innerHTML = open
            ? '<svg width="58" height="58" fill="none" stroke="#007fff" stroke-width="3"><circle cx="29" cy="29" r="27"/></svg>'
            : '<svg width="40" height="40" stroke="#000" stroke-width="3"><path d="M1 1 39 39M39 1 1 39"/></svg>';
    }
}

class UrlBar extends HTMLElement {
    constructor() {
        super();
        shadow(this, `
            <style>
                :host {
                    display: flex;
                    flex-direction: column;
                    align-items: center;
                    justify-content: space-between;
                    height: 156px;
                    padding: 28px 0 24px 44px;
                    box-sizing: border-box;
                    border-top: 1px solid #c4c4c6;
                    background: #fdfdfd;
                }
                a {
                    display: flex;
                    align-items: center;
                    gap: 20px;
                    color: black;
                    font: 46px/60px Inter, sans-serif;
                    text-decoration: none;
                }
                .home {
                    width: 417px;
                    height: 15px;
                    border-radius: 8px;
                    background: black;
                }
            </style>
            <a href="#top">
                <svg width="26" height="38" viewBox="0 0 26 38">
                    <path d="M5 18V10Q5 2 13 2T21 10V18" fill="none" stroke="#8a8a8f" stroke-width="3"/>
                    <rect y="16" width="26" height="22" rx="4" fill="#8a8a8f"/>
                </svg>
                <slot></slot>
            </a>
            <div class="home"></div>
        `);
    }
}

window.customElements.define('ticket-page', TicketPage);
window.customElements.define('club-crest', ClubCrest);
window.customElements.define('app-header', AppHeader);
window.customElements.define('albirex-badge', AlbirexBadge);
window.customElements.define('match-info', MatchInfo);
window.customElements.define('seat-notice', SeatNotice);
window.customElements.define('map-controls', MapControls);
window.customElements.define('seat-map', SeatMap);
window.customElements.define('seat-row', SeatRow);
window.customElements.define('url-bar', UrlBar);
</script>
</body>
</html>
